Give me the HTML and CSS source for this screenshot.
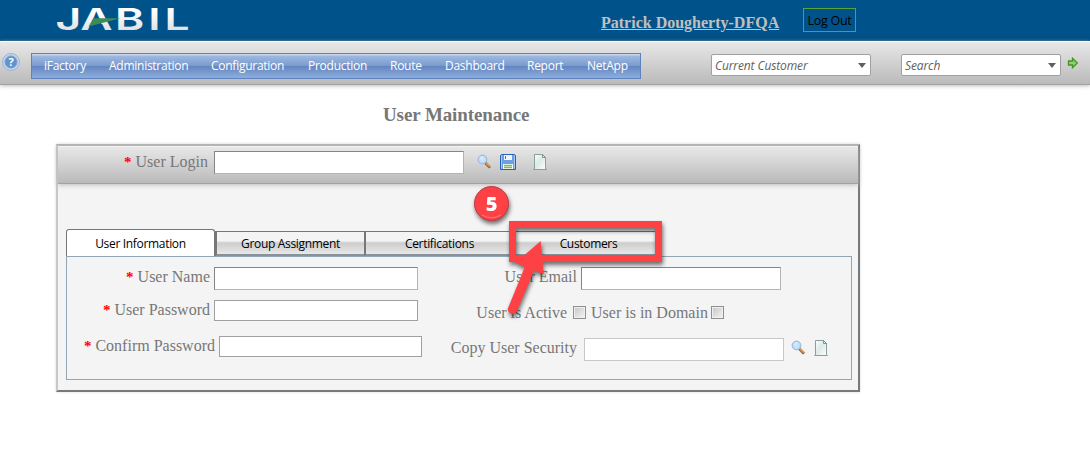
FILE: index.html
```html
<!DOCTYPE html>
<html lang="en">
<head>
<meta charset="utf-8">
<title>User Maintenance</title>
<link rel="stylesheet" href="styles.css">
</head>
<body>
<svg class="defs" width="0" height="0" aria-hidden="true">
  <defs>
    <linearGradient id="paper" x2="1" y2="1"><stop offset="0" stop-color="#fff"/><stop offset=".45" stop-color="#dce9e7"/><stop offset="1" stop-color="#fff"/></linearGradient>
    <linearGradient id="metal" x2="0" y2="1"><stop offset=".3" stop-color="#fff"/><stop offset="1" stop-color="#d5d5d5"/></linearGradient>
    <radialGradient id="lens"><stop offset="0" stop-color="#d3ebff"/><stop offset="1" stop-color="#b4d5f8"/></radialGradient>
    <symbol id="search" viewBox="0 0 16 16">
      <path d="M9 9.5l3.2 3.2" stroke="#9b6a3c" stroke-width="3" stroke-linecap="round"/>
      <path d="M9.6 9.4l2.7 2.6" stroke="#e3a25e" stroke-width="1.4" stroke-linecap="round"/>
      <circle cx="5.5" cy="5.5" r="4.4" fill="url(#lens)" stroke="#96b6df" stroke-width="1"/>
      <path d="M3.2 4.8a3 3 0 0 1 3-2" fill="none" stroke="#eef8ff"/>
    </symbol>
    <symbol id="page" viewBox="0 0 16 16">
      <path d="M1 15.5h14" stroke="#7c8582" stroke-width="1" opacity=".6"/>
      <path d="M2.5 .5h8l3 3v12h-11z" fill="url(#paper)" stroke="#87a09a"/>
      <path d="M10.5 .5v3h3z" fill="#e8f2ef" stroke="#708b84" stroke-width=".9"/>
    </symbol>
    <symbol id="save" viewBox="0 0 16 16">
      <path d="M.5 1.5l1-1h13l1 1v14H.5z" fill="#6d9de4" stroke="#2860b8"/>
      <path d="M1.5 1.5v13M14.5 1.5v13" stroke="#a9c9f2"/>
      <path d="M4 1h8v5H4z" fill="#eef5fe"/><path d="M5 2h1v3H5z" fill="#4776ba"/>
      <path d="M3 10h10v5H3z" fill="#fff"/><path d="M4 11.5h8M4 13.5h8" stroke="#80bb54" stroke-width="1.3"/>
    </symbol>
  </defs>
</svg>

<header class="masthead">
  <svg class="logo" width="140" height="40" viewBox="0 0 140 40" role="img" aria-label="Jabil">
    <g transform="scale(1.46 1)"><text class="wordmark" y="30.4" x="-.4 16.6 40.5 63.2 74.3" fill="url(#metal)">JABIL</text></g>
    <path d="M36.8 19.5h6.2L47 26.5H33.3z" fill="#00538a"/>
    <path d="M32.5 26.5L37.5 18.2H64.5z" fill="#3c8b58"/>
  </svg>
  <a class="account">Patrick Dougherty-DFQA</a>
  <button class="logout">Log Out</button>
</header>

<div class="toolbar">
  <svg class="help" width="18" height="18" viewBox="0 0 18 18">
    <circle cx="9" cy="9" r="8.5" fill="#c0d4ea" stroke="#9cb5d3"/><circle cx="9" cy="9" r="6" fill="#5f93cd" stroke="#7d9fc9"/>
    <text class="help-mark" x="9" y="13" text-anchor="middle">?</text>
  </svg>
  <nav class="menu">
    <a class="w65">iFactory</a><a class="w102">Administration</a><a class="w97">Configuration</a><a class="w82">Production</a><a class="w55">Route</a><a class="w82">Dashboard</a><a class="w60">Report</a><a>NetApp</a>
  </nav>
  <div class="combo customer"><span>Current Customer</span><i></i></div>
  <div class="combo"><span>Search</span><i></i></div>
  <svg class="go" width="12" height="12" viewBox="0 0 12 12"><path d="M1.5 4h4V1.3L10.3 6 5.5 10.7V8h-4z" fill="#8fd070" stroke="#429326" stroke-width="1.3"/></svg>
</div>

<h1 class="title">User Maintenance</h1>

<main class="panel">
  <div class="login">
    <label class="label"><b>*</b> User Login</label>
    <input class="field login-field">
    <svg class="find" width="16" height="16"><use href="#search"/></svg>
    <svg width="16" height="16"><use href="#save"/></svg>
    <svg class="new" width="16" height="16"><use href="#page"/></svg>
  </div>
  <div class="tabs">
    <div class="tab active">User Information</div><div class="tab">Group Assignment</div><div class="tab">Certifications</div><div class="tab">Customers</div>
  </div>
  <div class="form">
    <div class="column">
      <div class="row name"><label class="label"><b>*</b> User Name</label><input class="field"></div>
      <div class="row password"><label class="label"><b>*</b> User Password</label><input class="field"></div>
      <div class="row confirm"><label class="label"><b>*</b> Confirm Password</label><input class="field"></div>
    </div>
    <div class="column">
      <div class="row email"><label class="label">User Email</label><input class="field"></div>
      <div class="row flags"><label class="label">User is Active</label><i class="check"></i><label class="domain">User is in Domain</label><i class="check"></i></div>
      <div class="row copy"><label class="label">Copy User Security</label><input class="field"><svg width="16" height="16"><use href="#search"/></svg><svg width="16" height="16"><use href="#page"/></svg></div>
    </div>
  </div>
</main>

<svg class="callout" width="220" height="150" viewBox="460 180 220 150">
  <g class="marker"><circle cx="491.5" cy="203.5" r="17" fill="#fe4145" stroke="#b93a44"/>
  <path d="M482 215q9.5 5.5 19 0" fill="none" stroke="#ff7a7c"/>
  <text class="step" x="491.5" y="211" text-anchor="middle">5</text></g>
  <g class="marker">
    <rect x="512.5" y="224.5" width="146" height="34" fill="none" stroke="#fe4145" stroke-width="7"/>
    <path d="M540.7 241L543.7 274.3 534 270.5 516.8 311.5Q514.5 315 510.5 313.5 506.5 311 508.3 307.5L524.8 267 515.7 262.7z" fill="#fe4145"/>
  </g>
</svg>
</body>
</html>
```
FILE: styles.css
```css
* { box-sizing: border-box; }
body { margin: 0; width: 1090px; height: 455px; overflow: hidden; background: #fff; color: #777; font: 16px/18px "Liberation Serif", serif; }
svg { display: block; flex: none; }
.defs { position: absolute; }

.masthead { display: flex; align-items: flex-start; height: 41px; padding-left: 56px; background: linear-gradient(#00538a 34px, #004d80); }
.logo { overflow: visible; }
.wordmark { font: 600 30.4px Inter, sans-serif; }
.account { width: 178px; margin: 14px 24px 0 405px; color: #c0c0c0; font-weight: bold; text-decoration: underline; white-space: nowrap; }
.logout { width: 53px; height: 24px; margin-top: 8px; padding: 0; border: 1px solid #5aa33c; background: none; color: #000; font: 12.5px "Open Sans", sans-serif; letter-spacing: -.25px; white-space: nowrap; }

.toolbar { display: flex; height: 44px; padding: 11px 0 0 2px; border-top: 1px solid #fff; border-bottom: 1px solid #a3a3a3; background: linear-gradient(#e8e8e8, #bababa); box-shadow: 0 1px 4px #bbb; }
.help { margin-top: 0; }
.help-mark { font: bold 11px "Open Sans", sans-serif; fill: #fff; }
.menu { display: flex; width: 610px; height: 26px; margin-left: 11px; border: 1px solid #5c83c0; background: linear-gradient(#c5d6f0 1px, #9eb8df 2px, #7b9bcf 48%, #6487c2 52%, #8eaddb); color: #fff; font: 12px/24px "Open Sans", sans-serif; letter-spacing: -.26px; white-space: nowrap; }
.menu a { padding-left: 12px; }
.w55 { width: 55px; }
.w60 { width: 60px; }
.w65 { width: 65px; }
.w82 { width: 82px; }
.w97 { width: 97px; }
.w102 { width: 102px; }
.combo { display: flex; justify-content: space-between; align-items: center; width: 160px; height: 22px; margin-top: 1px; margin-right: 6px; padding: 0 4px 0 3px; border: 1px solid #a0a0a0; border-radius: 2px; background: #fff; color: #606060; font: italic 12px "Open Sans", sans-serif; letter-spacing: -.12px; white-space: nowrap; }
.customer { margin-left: 70px; margin-right: 30px; }
.combo i { border: solid transparent; border-width: 5px 4.5px 0; border-top-color: #606060; }
.go { margin-top: 4px; }

.title { width: 146px; margin: 19px 0 0 383px; font-size: 19px; line-height: 22px; letter-spacing: -.1px; white-space: nowrap; }

.panel { width: 804px; height: 248px; margin: 18px 0 0 56px; border: 2px solid; border-color: #b2b2b2 #77797b #77797b #c8c8c8; background: #f4f4f4; box-shadow: 0 0 3px #ddd; }
.login { display: flex; height: 38px; padding-top: 4px; border-top: 1px solid #f3f3f3; border-bottom: 1px solid #a3a3a3; background: linear-gradient(#e8e8e8, #bababa); box-shadow: 0 1px 5px #bbb; }
.label { text-align: right; white-space: nowrap; }
.label b { color: #f00; font-size: 15px; }
.login .label { width: 150px; margin: 2px 6px 0 0; }
.login svg { margin-top: 3px; }
.login .find { margin: 3px 7px 0 13px; }
.login .new { margin-left: 16px; }
.field { display: block; flex: none; width: 204px; height: 23px; padding: 0; border: 1px solid; border-color: #858585 #b4b4b4 #b4b4b4 #858585; background: #fff; }
.login-field { width: 250px; }

.tabs { display: flex; align-items: flex-end; height: 72px; padding-left: 8px; }
.tab { width: 149px; height: 25px; border: 1px solid #777; border-left: 2px solid #777; background: linear-gradient(#f4f4f4 40%, #cdcdcd 50%, #e8e8e8); border-bottom: 2px solid #8a9299; color: #000; font: 12px/24px "Open Sans", sans-serif; letter-spacing: -.32px; text-align: center; white-space: nowrap; }
.tab + .tab { border-right-width: 0; }
.tab.active { height: 27px; border: 1px solid #777; border-bottom: 0; border-radius: 3px 3px 0 0; background: #fff; line-height: 28px; }

.form { display: flex; width: 786px; height: 124px; margin-left: 8px; padding-top: 10px; border: 1px solid #92a5b5; }
.column { width: 376px; }
.row { display: flex; }
.row .label { width: 143px; margin: 1px 4px 0 0; }
.row.password { margin-top: 10px; }
.password .field, .confirm .field { height: 21px; border-color: #a0a0a0; }
.row.confirm { margin-top: 15px; }
.confirm .label { width: 148px; }
.confirm .field { width: 203px; }
.email .label { width: 134px; }
.email .field { width: 200px; }
.flags { margin-top: 13px; }
.flags .label { width: 124px; margin-right: 6px; }
.check { width: 13px; height: 13px; margin-top: 3px; border: 1px solid #8e8f8f; background: linear-gradient(135deg, #c5c5c5, #f5f5f5); outline: 1px solid #f0f0f0; outline-offset: -2px; }
.domain { margin: 1px 3px 0 5px; white-space: nowrap; }
.copy { margin-top: 16px; }
.copy .label { flex: none; width: 134px; margin: 1px 7px 0 0; }
.copy .field { width: 200px; border-color: #c8c8c8; }
.copy svg { margin: 2px 0 0 7px; }
.copy svg + svg { margin-left: 6px; }

.callout { position: absolute; left: 460px; top: 180px; }
.marker { filter: drop-shadow(1px 3px 2px rgba(0, 0, 0, .55)); }
.step { font: 800 20px "Open Sans", sans-serif; fill: #fff; }
```
